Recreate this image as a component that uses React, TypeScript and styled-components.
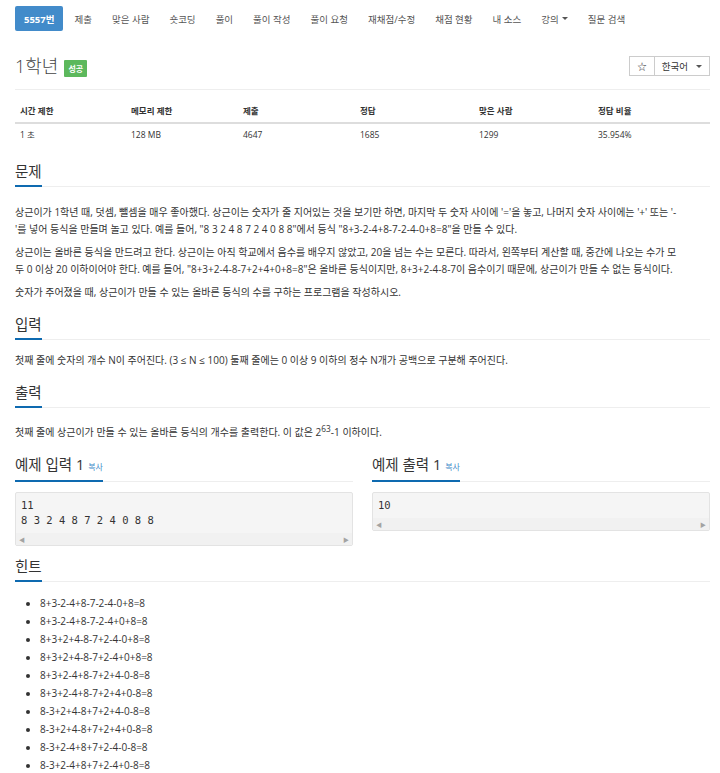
import styled, { createGlobalStyle } from "styled-components";

const GlobalStyle = createGlobalStyle`
	body {
		margin: 0;
		background: #fff;
		color: #333;
		font-family: "Open Sans", "Noto Sans CJK KR", sans-serif;
		font-size: 10px;
	}
`;

const Page = styled.div`
	width: 720px;
	padding: 6px 10px 0 15px;
	box-sizing: border-box;
`;

const Nav = styled.ul`
	display: flex;
	list-style: none;
	margin: 0;
	padding: 0;
	gap: 2px;
`;

const NavItem = styled.li<{ $active?: boolean }>`
	height: 25px;
	padding: 0 9px;
	display: flex;
	align-items: center;
	border-radius: 2px;
	font-size: 9.5px;
	white-space: nowrap;
	color: ${(p) => (p.$active ? "#fff" : "#555")};
	background: ${(p) => (p.$active ? "#428bca" : "transparent")};
	font-weight: ${(p) => (p.$active ? 700 : 400)};
`;

const Caret = styled.span`
	display: inline-block;
	margin-left: 3px;
	border-top: 3px solid #555;
	border-left: 3px solid transparent;
	border-right: 3px solid transparent;
`;

const TitleRow = styled.div`
	display: flex;
	align-items: center;
	justify-content: space-between;
	margin-top: 21px;
	padding-bottom: 9px;
	border-bottom: 1px solid #eee;
`;

const Title = styled.h1`
	margin: 0;
	font-size: 18px;
	line-height: 28px;
	font-weight: 300;
	color: #444;
	display: flex;
	align-items: center;
	gap: 6px;
`;

const Badge = styled.span`
	background: #5cb85c;
	color: #fff;
	font-size: 8px;
	line-height: 9px;
	font-weight: 700;
	padding: 4px 4px;
	border-radius: 1px;
	margin-top: 5px;
`;

const BtnGroup = styled.div`
	display: flex;
`;

const Btn = styled.div`
	height: 20px;
	box-sizing: border-box;
	border: 1px solid #ccc;
	display: flex;
	align-items: center;
	padding: 0 7px;
	font-size: 9.5px;
	color: #333;
	background: #fff;

	& + & {
		margin-left: -1px;
	}
`;

const Table = styled.table`
	width: 100%;
	border-collapse: collapse;
	table-layout: fixed;
	margin-top: 10px;
	font-size: 8.5px;

	th,
	td {
		text-align: left;
		padding: 4px 5px;
		line-height: 14px;
	}
	th {
		font-weight: 700;
		border-bottom: 2px solid #ddd;
	}
	td {
		border-top: 1px solid #ddd;
	}
`;

const Col = styled.col<{ $w: number }>`
	width: ${(p) => p.$w}px;
`;

const Headline = styled.div<{ $top?: number; $bottom?: number }>`
	margin-top: ${(p) => p.$top ?? 14}px;
	margin-bottom: ${(p) => p.$bottom ?? 12}px;
	border-bottom: 1px solid #eee;
`;

const HeadTitle = styled.h2`
	display: inline-block;
	margin: 0 0 -1px;
	padding-bottom: 3px;
	font-size: 14.5px;
	line-height: 20px;
	font-weight: 400;
	color: #333;
	border-bottom: 2px solid #0e6ab0;
`;

const Copy = styled.span`
	font-size: 8px;
	color: #428bca;
	margin-left: 4px;
`;

const Para = styled.p`
	margin: 0 0 6px;
	font-size: 10px;
	line-height: 17px;
	white-space: nowrap;
`;

const Samples = styled.div`
	display: grid;
	grid-template-columns: 1fr 1fr;
	gap: 19px;
	margin-top: 14px;
`;

const Pre = styled.div`
	background: #f5f5f5;
	border: 1px solid #e3e3e3;
	border-radius: 2px;
`;

const Code = styled.pre`
	margin: 0;
	padding: 5px 5px 5px;
	font-family: "DejaVu Sans Mono", "Liberation Mono", monospace;
	font-size: 10.5px;
	line-height: 15px;
	color: #333;
`;

const Scroll = styled.div`
	height: 12px;
	display: flex;
	justify-content: space-between;
	align-items: center;
	padding: 0 3px;
	background: #f1f1f1;
	color: #a3a3a3;
	font-size: 6px;
`;

const HintList = styled.ul`
	margin: 4px 0 0;
	padding-left: 25px;
	font-size: 10px;
	line-height: 18px;
	list-style: disc;
`;

const hints = [
	"8+3-2-4+8-7-2-4-0+8=8",
	"8+3-2-4+8-7-2-4+0+8=8",
	"8+3+2+4-8-7+2-4-0+8=8",
	"8+3+2+4-8-7+2-4+0+8=8",
	"8+3+2-4+8-7+2+4-0-8=8",
	"8+3+2-4+8-7+2+4+0-8=8",
	"8-3+2+4-8+7+2+4-0-8=8",
	"8-3+2+4-8+7+2+4+0-8=8",
	"8-3+2-4+8+7+2-4-0-8=8",
	"8-3+2-4+8+7+2-4+0-8=8",
];

const navItems = ["제출", "맞은 사람", "숏코딩", "풀이", "풀이 작성", "풀이 요청", "재채점/수정", "채점 현황", "내 소스"];

const colWidths = [111, 112, 117, 119, 119, 117];

const App = () => {
	return (
		<Page>
			<GlobalStyle />
			<Nav>
				<NavItem $active>5557번</NavItem>
				{navItems.map((item) => (
					<NavItem key={item}>{item}</NavItem>
				))}
				<NavItem>
					강의
					<Caret />
				</NavItem>
				<NavItem>질문 검색</NavItem>
			</Nav>

			<TitleRow>
				<Title>
					1학년 <Badge>성공</Badge>
				</Title>
				<BtnGroup>
					<Btn>☆</Btn>
					<Btn>
						한국어&nbsp;&nbsp;
						<Caret />
					</Btn>
				</BtnGroup>
			</TitleRow>

			<Table>
				<colgroup>
					{colWidths.map((w, i) => (
						<Col key={i} $w={w} />
					))}
				</colgroup>
				<thead>
					<tr>
						<th>시간 제한</th>
						<th>메모리 제한</th>
						<th>제출</th>
						<th>정답</th>
						<th>맞은 사람</th>
						<th>정답 비율</th>
					</tr>
				</thead>
				<tbody>
					<tr>
						<td>1 초</td>
						<td>128 MB</td>
						<td>4647</td>
						<td>1685</td>
						<td>1299</td>
						<td>35.954%</td>
					</tr>
				</tbody>
			</Table>

			<Headline $top={16} $bottom={17}>
				<HeadTitle>문제</HeadTitle>
			</Headline>
			<Para>
				상근이가 1학년 때, 덧셈, 뺄셈을 매우 좋아했다. 상근이는 숫자가 줄 지어있는 것을 보기만 하면, 마지막 두 숫자 사이에 '='을 놓고, 나머지 숫자 사이에는 '+' 또는 '-
				<br />
				'를 넣어 등식을 만들며 놀고 있다. 예를 들어, "8 3 2 4 8 7 2 4 0 8 8"에서 등식 "8+3-2-4+8-7-2-4-0+8=8"을 만들 수 있다.
			</Para>
			<Para>
				상근이는 올바른 등식을 만드려고 한다. 상근이는 아직 학교에서 음수를 배우지 않았고, 20을 넘는 수는 모른다. 따라서, 왼쪽부터 계산할 때, 중간에 나오는 수가 모
				<br />
				두 0 이상 20 이하이어야 한다. 예를 들어, "8+3+2-4-8-7+2+4+0+8=8"은 올바른 등식이지만, 8+3+2-4-8-7이 음수이기 때문에, 상근이가 만들 수 없는 등식이다.
			</Para>
			<Para>숫자가 주어졌을 때, 상근이가 만들 수 있는 올바른 등식의 수를 구하는 프로그램을 작성하시오.</Para>

			<Headline>
				<HeadTitle>입력</HeadTitle>
			</Headline>
			<Para>첫째 줄에 숫자의 개수 N이 주어진다. (3 ≤ N ≤ 100) 둘째 줄에는 0 이상 9 이하의 정수 N개가 공백으로 구분해 주어진다.</Para>

			<Headline>
				<HeadTitle>출력</HeadTitle>
			</Headline>
			<Para>
				첫째 줄에 상근이가 만들 수 있는 올바른 등식의 개수를 출력한다. 이 값은 2<sup>63</sup>-1 이하이다.
			</Para>

			<Samples>
				<div>
					<Headline $top={0} $bottom={10}>
						<HeadTitle>
							예제 입력 1<Copy>복사</Copy>
						</HeadTitle>
					</Headline>
					<Pre>
						<Code>{"11\n8 3 2 4 8 7 2 4 0 8 8"}</Code>
						<Scroll>
							<span>◀</span>
							<span>▶</span>
						</Scroll>
					</Pre>
				</div>
				<div>
					<Headline $top={0} $bottom={10}>
						<HeadTitle>
							예제 출력 1<Copy>복사</Copy>
						</HeadTitle>
					</Headline>
					<Pre>
						<Code>10</Code>
						<Scroll>
							<span>◀</span>
							<span>▶</span>
						</Scroll>
					</Pre>
				</div>
			</Samples>

			<Headline $top={11}>
				<HeadTitle>힌트</HeadTitle>
			</Headline>
			<HintList>
				{hints.map((h) => (
					<li key={h}>{h}</li>
				))}
			</HintList>
		</Page>
	);
};

export default App;
